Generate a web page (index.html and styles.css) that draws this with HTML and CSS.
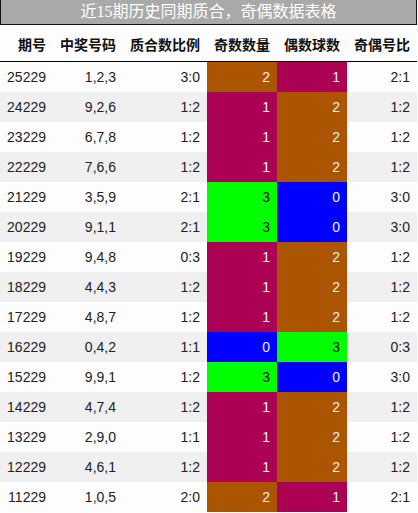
FILE: index.html
```html
<!DOCTYPE html>
<html>
<head>
    <meta charset="utf-8">
    <title>近15期历史同期质合，奇偶数据表格</title>
    <link rel="stylesheet" href="styles.css">
</head>
<body>
    <div class="title">近15期历史同期质合，奇偶数据表格</div>
    <table class="data">
        <thead>
            <tr>
                <th class="c1">期号</th>
                <th class="c2">中奖号码</th>
                <th class="c3">质合数比例</th>
                <th class="c4">奇数数量</th>
                <th class="c5">偶数球数</th>
                <th class="c6">奇偶号比</th>
            </tr>
        </thead>
        <tbody>
            <tr><td>25229</td><td>1,2,3</td><td>3:0</td><td class="orange">2</td><td class="red">1</td><td>2:1</td></tr>
            <tr><td>24229</td><td>9,2,6</td><td>1:2</td><td class="red">1</td><td class="orange">2</td><td>1:2</td></tr>
            <tr><td>23229</td><td>6,7,8</td><td>1:2</td><td class="red">1</td><td class="orange">2</td><td>1:2</td></tr>
            <tr><td>22229</td><td>7,6,6</td><td>1:2</td><td class="red">1</td><td class="orange">2</td><td>1:2</td></tr>
            <tr><td>21229</td><td>3,5,9</td><td>2:1</td><td class="green">3</td><td class="blue">0</td><td>3:0</td></tr>
            <tr><td>20229</td><td>9,1,1</td><td>2:1</td><td class="green">3</td><td class="blue">0</td><td>3:0</td></tr>
            <tr><td>19229</td><td>9,4,8</td><td>0:3</td><td class="red">1</td><td class="orange">2</td><td>1:2</td></tr>
            <tr><td>18229</td><td>4,4,3</td><td>1:2</td><td class="red">1</td><td class="orange">2</td><td>1:2</td></tr>
            <tr><td>17229</td><td>4,8,7</td><td>1:2</td><td class="red">1</td><td class="orange">2</td><td>1:2</td></tr>
            <tr><td>16229</td><td>0,4,2</td><td>1:1</td><td class="blue">0</td><td class="green">3</td><td>0:3</td></tr>
            <tr><td>15229</td><td>9,9,1</td><td>1:2</td><td class="green">3</td><td class="blue">0</td><td>3:0</td></tr>
            <tr><td>14229</td><td>4,7,4</td><td>1:2</td><td class="red">1</td><td class="orange">2</td><td>1:2</td></tr>
            <tr><td>13229</td><td>2,9,0</td><td>1:1</td><td class="red">1</td><td class="orange">2</td><td>1:2</td></tr>
            <tr><td>12229</td><td>4,6,1</td><td>1:2</td><td class="red">1</td><td class="orange">2</td><td>1:2</td></tr>
            <tr><td>11229</td><td>1,0,5</td><td>2:0</td><td class="orange">2</td><td class="red">1</td><td>2:1</td></tr>
        </tbody>
    </table>
</body>
</html>
```

FILE: styles.css
```css
body {
    margin: 0;
    background-color: #fdfdfd;
    font-family: "Liberation Sans", "Noto Sans CJK SC", sans-serif;
    color: #222;
}
.title {
    width: 415px;
    height: 24px;
    line-height: 24px;
    background-color: #a9a9a9;
    border: 1px solid #111;
    border-top: none;
    color: #fff;
    font-family: "Liberation Serif", "Noto Sans CJK SC", serif;
    font-size: 16px;
    text-align: center;
}
.data {
    width: 417px;
    border-collapse: collapse;
    table-layout: fixed;
    font-size: 14px;
}
.data th {
    height: 35px;
    padding: 1px 7px 0 0;
    text-align: right;
    font-weight: bold;
    color: #111;
    border-bottom: 1px solid #000;
}
.data td {
    height: 30px;
    padding: 0 7px 0 0;
    text-align: right;
}
.data tbody tr:nth-child(even) {
    background-color: #f0f0f0;
}
.c1 { width: 46px; }
.c2 { width: 63px; }
.c3 { width: 77px; }
.c4 { width: 63px; }
.c5 { width: 63px; }
.c6 { width: 63px; }
.data td.orange {
    background-color: #ac5500;
    color: #f2f2f2;
}
.data td.red {
    background-color: #ac0055;
    color: #f2f2f2;
}
.data td.green {
    background-color: #00ff00;
    color: #111;
}
.data td.blue {
    background-color: #0000ff;
    color: #f2f2f2;
}
```
